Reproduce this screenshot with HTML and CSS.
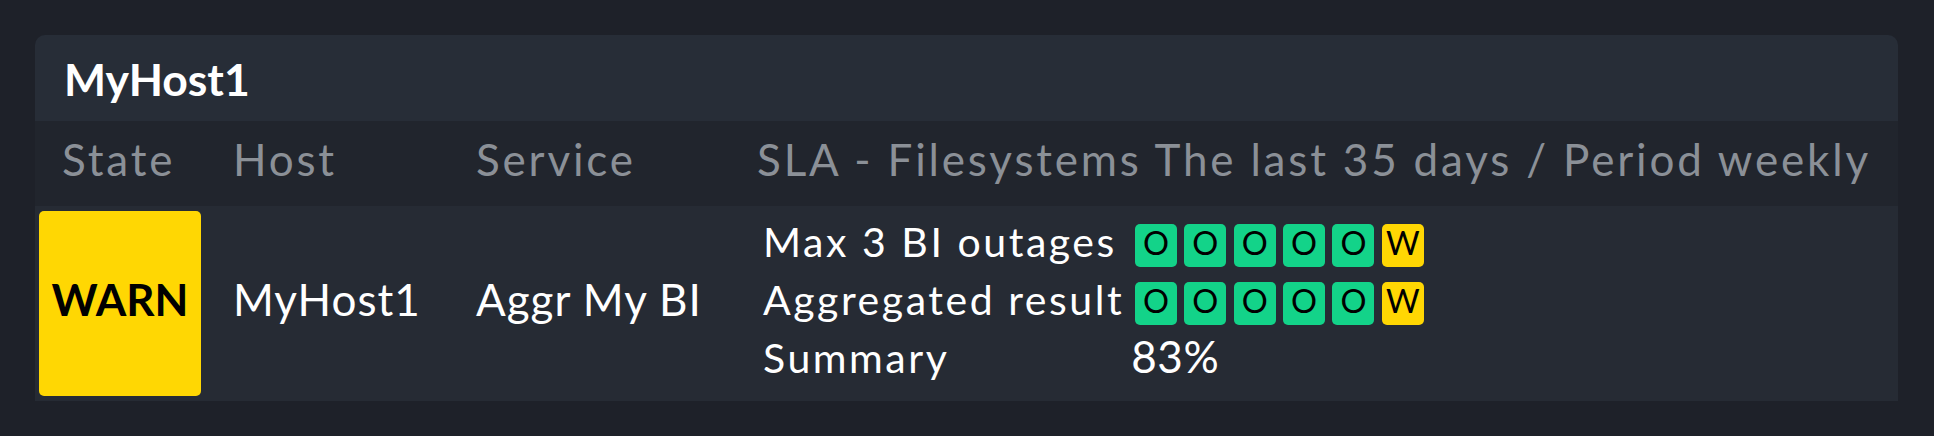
FILE: index.html
```html
<!DOCTYPE html>
<html>
<head>
<meta charset="utf-8">
<link rel="stylesheet" href="styles.css">
</head>
<body>
<div class="card">
  <div class="card-title">MyHost1</div>
  <div class="row head">
    <div class="th th-state">State</div>
    <div class="th">Host</div>
    <div class="th">Service</div>
    <div class="th">SLA - Filesystems The last 35 days / Period weekly</div>
  </div>
  <div class="row data">
    <div class="td td-state"><div class="badge">WARN</div></div>
    <div class="td">MyHost1</div>
    <div class="td">Aggr My BI</div>
    <div class="td td-sla">
      <div class="sla">
        <div class="sla-label">Max 3 BI outages</div>
        <div class="sla-value">
          <span class="box ok">O</span><span class="box ok">O</span><span class="box ok">O</span><span class="box ok">O</span><span class="box ok">O</span><span class="box warn">W</span>
        </div>
        <div class="sla-label">Aggregated result</div>
        <div class="sla-value">
          <span class="box ok">O</span><span class="box ok">O</span><span class="box ok">O</span><span class="box ok">O</span><span class="box ok">O</span><span class="box warn">W</span>
        </div>
        <div class="sla-label">Summary</div>
        <div class="sla-value pct">83%</div>
      </div>
    </div>
  </div>
</div>
</body>
</html>
```

FILE: styles.css
```css
html, body {
  margin: 0;
  background: #1e2129;
}
body {
  padding: 35px 36px 35px 35px;
  font-family: Lato, "Noto Sans", sans-serif;
  color: #ffffff;
}
.card {
  background: #272d37;
  border-radius: 10px 10px 0 0;
  overflow: hidden;
}
.card-title {
  height: 86px;
  display: flex;
  align-items: center;
  padding-left: 29px;
  font-size: 44.5px;
  font-weight: 700;
}
.row {
  display: grid;
  grid-template-columns: 198px 243px 281px 1fr;
}
.row.head {
  height: 85px;
  background: #21252d;
  align-items: center;
}
.th {
  font-size: 44px;
  color: #8b9097;
  letter-spacing: 2.82px;
  white-space: nowrap;
  padding-bottom: 9px;
}
.th-state {
  padding-left: 27px;
}
.row.data {
  height: 195px;
  background: #262b34;
  align-items: center;
}
.td {
  font-size: 44px;
  letter-spacing: 1px;
  white-space: nowrap;
  padding-bottom: 9px;
}
.td-state {
  align-self: stretch;
  display: flex;
  padding: 5px 0 5px 4px;
  letter-spacing: 0;
}
.td-sla {
  padding-bottom: 0;
}
.badge {
  width: 162px;
  background: #ffd703;
  color: #000000;
  border-radius: 5px;
  font-weight: 700;
  display: flex;
  align-items: center;
  justify-content: center;
  padding-bottom: 9px;
  box-sizing: border-box;
}
.sla {
  display: grid;
  grid-template-columns: auto auto;
  justify-content: start;
  grid-auto-rows: 58px;
  align-items: center;
  font-size: 41px;
  letter-spacing: 2.55px;
  padding-left: 6px;
}
.sla-label {
  padding-right: 7px;
  padding-bottom: 9px;
}
.sla-value {
  display: flex;
  align-items: center;
}
.box {
  width: 42px;
  height: 43px;
  box-sizing: border-box;
  padding-bottom: 5px;
  margin: 0 3.7px;
  border-radius: 5px;
  font-size: 32.5px;
  letter-spacing: 0;
  line-height: 38px;
  text-align: center;
  color: #000000;
}
.box.ok {
  background: #13d389;
}
.box.warn {
  background: #ffd703;
}
.pct {
  letter-spacing: 0.6px;
  font-size: 44px;
  padding-bottom: 11px;
}
```
